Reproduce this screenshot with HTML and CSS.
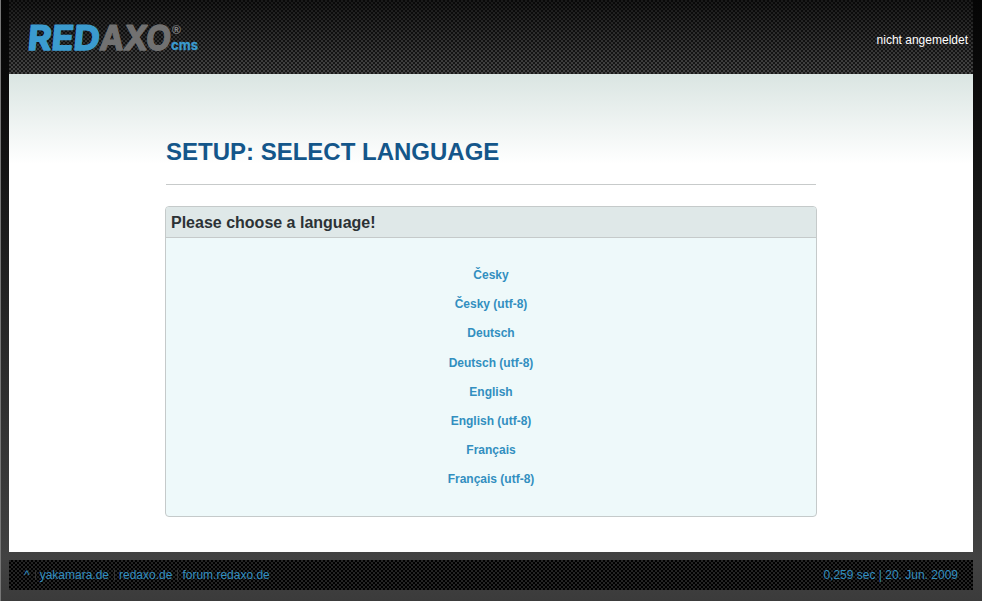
FILE: index.html
```html
<!DOCTYPE html>
<html lang="en">
<head>
<meta charset="utf-8">
<title>REDAXO Setup</title>
<link rel="stylesheet" href="styles.css">
</head>
<body>
<div class="page">
  <header class="header">
    <svg class="logo" width="172" height="30" viewBox="0 0 172 30" role="img" aria-label="REDAXO cms">
      <g transform="translate(0 26.5) skewX(-5)">
        <text class="word red" x="-1" y="0" textLength="72" lengthAdjust="spacingAndGlyphs">RED</text>
        <text class="word axo" x="71" y="0" textLength="71" lengthAdjust="spacingAndGlyphs">AXO</text>
      </g>
      <text class="reg" x="144" y="10.5">®</text>
      <text class="cms" x="143" y="26.5" textLength="27" lengthAdjust="spacingAndGlyphs">cms</text>
    </svg>
    <p class="login">nicht angemeldet</p>
  </header>
  <main class="content">
    <h1 class="title">SETUP: SELECT LANGUAGE</h1>
    <section class="panel">
      <h2 class="panel-title">Please choose a language!</h2>
      <ul class="languages">
        <li><a>Česky</a></li>
        <li><a>Česky (utf-8)</a></li>
        <li><a>Deutsch</a></li>
        <li><a>Deutsch (utf-8)</a></li>
        <li><a>English</a></li>
        <li><a>English (utf-8)</a></li>
        <li><a>Français</a></li>
        <li><a>Français (utf-8)</a></li>
      </ul>
    </section>
  </main>
  <footer class="footer">
    <ul class="links">
      <li><a>^</a></li>
      <li><a>yakamara.de</a></li>
      <li><a>redaxo.de</a></li>
      <li><a>forum.redaxo.de</a></li>
    </ul>
    <p class="stats">0,259 sec | 20. Jun. 2009</p>
  </footer>
</div>
</body>
</html>
```
FILE: styles.css
```css
* { box-sizing: border-box; margin: 0; padding: 0; }
body {
  height: 601px;
  overflow: hidden;
  border-left: 1px solid #777;
  background: linear-gradient(#050505 0, #0a0a0a 80px, #424242 560px, #3b3b3b 601px);
  font: 12px/15px "Liberation Sans", Arial, sans-serif;
}
ul { list-style: none; }
.page { width: 964px; margin-left: 8px; }
.header {
  display: flex;
  justify-content: space-between;
  height: 74px;
  padding: 23px 5px 0 19px;
  background:
    repeating-conic-gradient(rgba(0, 0, 0, .65) 0 25%, transparent 0 50%) 0 0 / 4px 4px,
    linear-gradient(#191919, #444);
}
.logo { display: block; overflow: visible; }
.word { font: 700 34px Inter, sans-serif; stroke-width: 1.5; stroke-linejoin: round; }
.red { fill: #3b9bcf; stroke: #3b9bcf; }
.axo { fill: #717171; stroke: #717171; }
.reg { font: bold 12px "Liberation Sans", sans-serif; fill: #858585; }
.cms { font: 700 14.5px Inter, sans-serif; fill: #3b9bcf; stroke: #3b9bcf; stroke-width: .3; }
.login { padding-top: 10px; color: #fff; }
.content {
  height: 478px;
  padding: 63px 157px 0;
  background: linear-gradient(#dae5e2, #fff 90px) #fff;
}
.title {
  height: 48px;
  border-bottom: 1px solid #c7caca;
  color: #14568a;
  font-size: 24px;
  line-height: 30px;
}
.panel {
  height: 311px;
  margin: 21px -1px 0;
  border: 1px solid #c5caca;
  border-radius: 4px;
  background: #eef9fa;
  overflow: hidden;
}
.panel-title {
  height: 31px;
  padding-left: 5px;
  border-bottom: 1px solid #c5caca;
  background: #dfe8e8;
  color: #2c3235;
  font-size: 16px;
  line-height: 31px;
}
.languages {
  padding-top: 23px;
  color: #328fc0;
  font-weight: bold;
  line-height: 29.2px;
  text-align: center;
}
.footer {
  display: flex;
  align-items: center;
  justify-content: space-between;
  height: 30px;
  margin-top: 8px;
  padding: 0 15px;
  background: repeating-conic-gradient(#000 0 25%, #242424 0 50%) 0 0 / 4px 4px;
  color: #328fc0;
}
.links { display: flex; }
.links li + li { margin-left: 5px; padding-left: 4px; border-left: 1px solid #333; line-height: 10px; }
.links li { line-height: 10px; }
```
